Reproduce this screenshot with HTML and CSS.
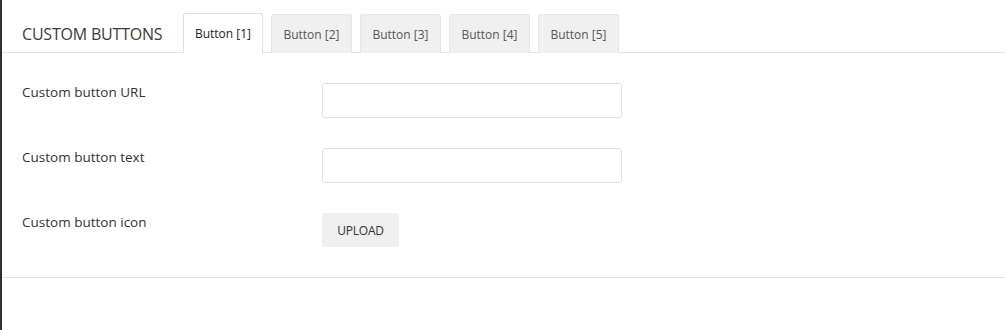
FILE: index.html
```html
<!DOCTYPE html>
<html>
<head>
<meta charset="utf-8">
<link rel="stylesheet" href="styles.css">
</head>
<body>
<div class="panel">
  <div class="header">
    <h2 class="title">CUSTOM BUTTONS</h2>
    <div class="tabs">
      <div class="tab active">Button [1]</div>
      <div class="tab">Button [2]</div>
      <div class="tab">Button [3]</div>
      <div class="tab">Button [4]</div>
      <div class="tab">Button [5]</div>
    </div>
  </div>
  <div class="form">
    <div class="row">
      <label class="label">Custom button URL</label>
      <input class="input" type="text">
    </div>
    <div class="row">
      <label class="label">Custom button text</label>
      <input class="input" type="text">
    </div>
    <div class="row">
      <label class="label">Custom button icon</label>
      <button class="upload">UPLOAD</button>
    </div>
  </div>
</div>
</body>
</html>
```
FILE: styles.css
```css
html, body {
  margin: 0;
  padding: 0;
  background: #fff;
}
body {
  font-family: "Open Sans", "Noto Sans", sans-serif;
  color: #333;
}
.panel {
  height: 330px;
  border-left: 2px solid #2f2f2f;
  box-sizing: border-box;
  padding-right: 1px;
}
.header {
  display: flex;
  align-items: flex-end;
  height: 52px;
  border-bottom: 1px solid #e3e3e3;
}
.title {
  margin: 0;
  padding: 0 0 8px 20px;
  width: 181px;
  box-sizing: border-box;
  font-size: 16px;
  font-weight: 400;
  line-height: 20px;
  color: #3a3a3a;
  white-space: nowrap;
  letter-spacing: -0.2px;
}
.tabs {
  display: flex;
  gap: 8px;
  margin-bottom: -1px;
}
.tab {
  width: 81px;
  height: 39px;
  box-sizing: border-box;
  display: flex;
  align-items: center;
  justify-content: center;
  font-size: 12px;
  color: #555;
  background: #f0f0f0;
  border: 1px solid #e6e6e6;
  border-bottom: none;
  border-radius: 3px 3px 0 0;
}
.tab.active {
  width: 80px;
  background: #fff;
  color: #222;
  border-color: #e0e0e0;
  height: 40px;
  margin-top: -1px;
}
.form {
  padding: 30px 0 30px 20px;
  border-bottom: 1px solid #e3e3e3;
  display: flex;
  flex-direction: column;
  gap: 30px;
}
.row {
  display: flex;
  align-items: flex-start;
}
.label {
  width: 300px;
  font-size: 13.5px;
  line-height: 18px;
  padding-top: 0;
  color: #333;
}
.input {
  width: 300px;
  height: 35px;
  box-sizing: border-box;
  margin: 0;
  border: 1px solid #e2e2e2;
  border-radius: 3px;
  background: #fff;
  outline: none;
}
.upload {
  width: 77px;
  height: 34px;
  margin: 0;
  border: none;
  border-radius: 3px;
  background: #efefef;
  font-family: "Open Sans", "Noto Sans", sans-serif;
  font-size: 12px;
  color: #333;
  letter-spacing: -0.2px;
  padding: 1px 0 0;
}
```
